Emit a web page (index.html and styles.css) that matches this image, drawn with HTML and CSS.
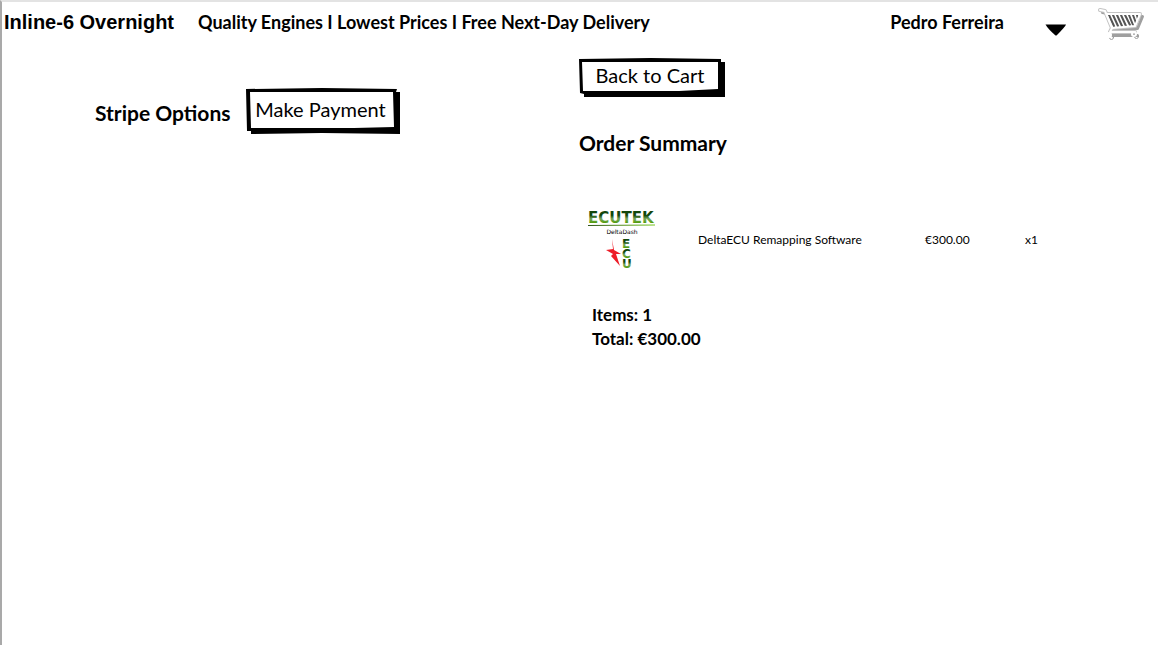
FILE: index.html
```html
<!DOCTYPE html>
<html lang="en">
<head>
<meta charset="utf-8">
<title>Inline-6 Overnight</title>
<link rel="stylesheet" href="styles.css">
</head>
<body>
<header class="header">
  <a class="brand" href="#">Inline-6 Overnight</a>
  <p class="tagline">Quality Engines I Lowest Prices I Free Next-Day Delivery</p>
  <span class="user">Pedro Ferreira</span>
  <button class="icon-button menu" type="button" aria-label="Account menu">
    <svg width="22" height="12" viewBox="0 0 22 12"><path d="M0.500 0.500H21Q20 3 11.500 11.500H10.500Q3 5 0.500 0.500Z"/></svg>
  </button>
  <a class="cart" href="#" aria-label="Shopping cart">
    <svg width="48" height="34" viewBox="0 0 48 34" fill="none" stroke-linecap="round" stroke-linejoin="round">
      <g class="cart-shadow" transform="translate(1.500 1.500)">
        <path stroke-width="3" d="M3 4L8 5L15 22L13 27M9 8H43L38 20L15 22M13 27H38"/>
        <circle cx="12" cy="29" r="2"/><circle cx="37" cy="28" r="2"/>
      </g>
      <g class="cart-edge">
        <path stroke-width="4" d="M2 3L7 4L14 21L12 25M8 7H42L37 19L14 21M12 25H37"/>
        <circle cx="11" cy="28" r="2"/><circle cx="36" cy="27" r="2"/>
      </g>
      <path class="cart-back" d="M9 8H41L37 19L14 20Z"/>
      <path class="cart-bars" d="M11 8L16 19M15 8L20 19M19 8L24 19M23 8L28 19M27 8L32 18M31 8L35 18M35 8L38 16M39 8L40 12"/>
      <g class="cart-frame">
        <path d="M2 3L7 4L14 21L12 25M8 7H42L37 19L14 21M12 25H37"/>
        <circle cx="11" cy="28" r="2"/><circle cx="36" cy="27" r="2"/>
      </g>
    </svg>
  </a>
</header>
<main class="checkout">
  <section class="payment">
    <h2 class="title">Stripe Options</h2>
    <button class="sketch-button pay" type="button">
      <svg class="frame" viewBox="0 0 154 46" preserveAspectRatio="none"><path d="M0 1L76 0L151 1L150 4L154 4V46L76 45L5 46V43L1 43ZM4 4L5 40L108 40L148 39L147 4Z" fill-rule="evenodd"/></svg>
      <span class="label">Make Payment</span>
    </button>
  </section>
  <section class="summary">
    <button class="sketch-button back" type="button">
      <svg class="frame" viewBox="0 0 146 40" preserveAspectRatio="none"><path d="M0 1L72 0L142 1V4L146 4V39L5 39V36L1 35ZM3 4L4 33L100 33L139 31V4Z" fill-rule="evenodd"/></svg>
      <span class="label">Back to Cart</span>
    </button>
    <h2 class="title order">Order Summary</h2>
    <div class="item">
      <svg class="product" width="68" height="64" viewBox="0 0 68 64" role="img" aria-label="EcuTek DeltaDash ECU">
        <defs>
          <linearGradient id="green" x1="0" y1="0" x2="0" y2="1"><stop offset="0" stop-color="#12470c"/><stop offset=".35" stop-color="#12470c"/><stop offset=".55" stop-color="#79a85c"/><stop offset=".8" stop-color="#4c9b00"/></linearGradient>
          <linearGradient id="lime" x1="0" y1="0" x2="1" y2="0"><stop offset="0" stop-color="#31551c"/><stop offset="1" stop-color="#75c51c"/></linearGradient>
        </defs>
        <text class="logo-name" x="0" y="15" fill="url(#green)">ECUTEK</text>
        <path d="M0 17.500L67 17" stroke="url(#lime)"/>
        <text class="logo-sub" x="34" y="26" text-anchor="middle">DeltaDash</text>
        <path fill="#ed1d28" d="M24 31L26 42L33 46L28 46L32 58L23 48L25 46L18 42L25 41Z"/>
        <g class="logo-stack" fill="url(#green)"><text x="34" y="40">E</text><text x="34" y="50">C</text><text x="34" y="60">U</text></g>
      </svg>
      <span>DeltaECU Remapping Software</span>
      <span>€300.00</span>
      <span>x1</span>
    </div>
    <div class="totals">
      <p>Items: 1</p>
      <p>Total: €300.00</p>
    </div>
  </section>
</main>
</body>
</html>
```
FILE: styles.css
```css
* { box-sizing: border-box; }
body {
  margin: 0;
  min-height: 100vh;
  border-top: 2px solid #e3e3e3;
  border-left: 2px solid #a9a9a9;
  background: #fff;
  color: #000;
  font-family: Lato, "Open Sans", sans-serif;
}
h2, p { margin: 0; }
button { padding: 0; border: 0; background: none; color: inherit; font: inherit; cursor: pointer; }
a { color: inherit; text-decoration: none; }
svg { display: block; }
.header { display: flex; align-items: center; height: 40px; padding: 0 12px 0 2px; }
.brand { width: 194px; font: bold 20px/40px "Liberation Sans", sans-serif; white-space: nowrap; }
.tagline, .user { font-size: 18px; font-weight: 700; line-height: 40px; white-space: nowrap; }
.user { margin-left: auto; }
.menu { margin: 16px 31px 0 41px; }
.cart { margin-top: 4px; }
.cart-shadow { stroke: #888; opacity: .8; }
.cart-edge { stroke: #c4c4c4; }
.cart-back { fill: #fff; }
.cart-bars { stroke: #555; stroke-width: 2; }
.cart-frame { stroke: #fff; stroke-width: 2; }
.checkout { display: grid; grid-template-columns: 1fr 1fr; padding-right: 2px; }
.payment { display: flex; align-items: flex-start; gap: 15px; padding: 46px 0 0 93px; }
.payment .title { padding-top: 11px; }
.title { font-size: 21px; font-weight: 700; line-height: 28px; }
.sketch-button { display: grid; }
.sketch-button > * { grid-area: 1 / 1; }
.frame { width: 100%; height: 100%; }
.label { font-size: 20px; line-height: 24px; }
.pay { width: 154px; height: 46px; }
.pay .label { padding: 9px 4px 0 0; }
.back { width: 146px; height: 40px; }
.back .label { padding: 5px 4px 0 0; }
.summary { padding-top: 16px; }
.order { margin-top: 31px; }
.item { display: grid; grid-template-columns: 110px 227px 100px 1fr; align-items: center; margin-top: 51px; padding-left: 9px; font-size: 12px; line-height: 16px; }
.totals { margin-top: 31px; padding-left: 13px; font-size: 17px; font-weight: 700; line-height: 24px; }
.logo-name { font: bold 15px "DejaVu Sans", sans-serif; }
.logo-sub { font: 6px "DejaVu Sans", sans-serif; }
.logo-stack { font: bold 12px "DejaVu Sans", sans-serif; }
```
